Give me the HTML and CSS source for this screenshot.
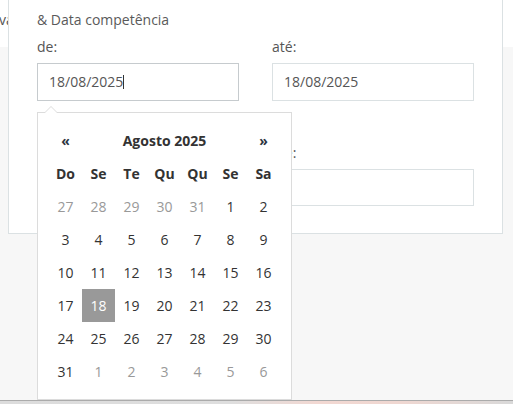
FILE: index.html
```html
<!DOCTYPE html>
<html lang="pt-BR">
<head>
    <meta charset="UTF-8">
    <meta name="viewport" content="width=device-width, initial-scale=1.0">
    <title>Filtros</title>
    <link rel="stylesheet" href="styles.css">
</head>
<body>

    <div class="page">
        <div class="side"><span>va</span></div>

        <div class="panel">
            <div class="group">
                <div class="group-title">&amp; Data competência</div>
                <div class="row">
                    <div class="field">
                        <label>de:</label>
                        <div class="input focused">18/08/2025<span class="caret"></span></div>
                    </div>
                    <div class="field">
                        <label>até:</label>
                        <div class="input">18/08/2025</div>
                    </div>
                </div>
            </div>

            <!-- second range sits under the open datepicker -->
            <div class="group second">
                <div class="group-title">&nbsp;</div>
                <div class="row">
                    <div class="field">
                        <label>&nbsp;</label>
                        <div class="input"></div>
                    </div>
                    <div class="field">
                        <label>até:</label>
                        <div class="input"></div>
                    </div>
                </div>
            </div>

            <!-- datepicker dropdown -->
            <div class="datepicker">
                <div class="dp-grid">
                    <div class="dp-nav">&laquo;</div>
                    <div class="dp-switch">Agosto 2025</div>
                    <div class="dp-nav">&raquo;</div>

                    <div class="dow">Do</div>
                    <div class="dow">Se</div>
                    <div class="dow">Te</div>
                    <div class="dow">Qu</div>
                    <div class="dow">Qu</div>
                    <div class="dow">Se</div>
                    <div class="dow">Sa</div>

                    <div class="day old">27</div>
                    <div class="day old">28</div>
                    <div class="day old">29</div>
                    <div class="day old">30</div>
                    <div class="day old">31</div>
                    <div class="day">1</div>
                    <div class="day">2</div>

                    <div class="day">3</div>
                    <div class="day">4</div>
                    <div class="day">5</div>
                    <div class="day">6</div>
                    <div class="day">7</div>
                    <div class="day">8</div>
                    <div class="day">9</div>

                    <div class="day">10</div>
                    <div class="day">11</div>
                    <div class="day">12</div>
                    <div class="day">13</div>
                    <div class="day">14</div>
                    <div class="day">15</div>
                    <div class="day">16</div>

                    <div class="day">17</div>
                    <div class="day active">18</div>
                    <div class="day">19</div>
                    <div class="day">20</div>
                    <div class="day">21</div>
                    <div class="day">22</div>
                    <div class="day">23</div>

                    <div class="day">24</div>
                    <div class="day">25</div>
                    <div class="day">26</div>
                    <div class="day">27</div>
                    <div class="day">28</div>
                    <div class="day">29</div>
                    <div class="day">30</div>

                    <div class="day">31</div>
                    <div class="day new">1</div>
                    <div class="day new">2</div>
                    <div class="day new">3</div>
                    <div class="day new">4</div>
                    <div class="day new">5</div>
                    <div class="day new">6</div>
                </div>
            </div>
        </div>

        <div class="side"></div>
    </div>

    <div class="bottom-bar"></div>

</body>
</html>
```

FILE: styles.css
```css
body {
    font-family: 'Open Sans', 'Noto Sans', sans-serif;
    font-size: 14px;
    margin: 0;
    padding: 0;
    color: #555;
    background: linear-gradient(#fff 0, #fff 47px, #f7f7f7 47px);
    height: 404px;
    overflow: hidden;
}
.page {
    display: flex;
    align-items: flex-start;
}
.side {
    width: 8px;
    height: 47px;
    overflow: hidden;
    white-space: nowrap;
    line-height: 40px;
    flex-shrink: 0;
}
.side span {
    margin-left: -1px;
}
.side:last-child {
    flex: 1;
}

.panel {
    position: relative;
    width: 495px;
    box-sizing: border-box;
    background-color: #fff;
    border: 1px solid #dbe1e3;
    border-top: none;
    padding: 10px 28px 27px;
}
.group-title {
    line-height: 20px;
    color: #5a5a5a;
}
.group.second {
    margin-top: 15px;
}
.row {
    display: grid;
    grid-template-columns: 202px 202px;
    column-gap: 33px;
}
.field label {
    display: block;
    margin-top: 7px;
    line-height: 20px;
}
.input {
    margin-top: 6px;
    height: 38px;
    box-sizing: border-box;
    border: 1px solid #dbe1e3;
    padding: 0 11px;
    line-height: 36px;
    color: #555;
}
.input.focused {
    border-color: #c6cbce;
}
.caret {
    display: inline-block;
    width: 0;
    height: 14px;
    border-left: 1px solid #333;
    vertical-align: -2px;
}
.group.second .input {
    height: 37px;
}

/* Datepicker dropdown */
.datepicker {
    position: absolute;
    top: 112px;
    left: 28px;
    width: 255px;
    box-sizing: border-box;
    padding: 11px;
    background-color: #fff;
    border: 1px solid #dcdcdc;
}
.datepicker:before {
    content: '';
    position: absolute;
    top: -7px;
    left: 6px;
    border-left: 7px solid transparent;
    border-right: 7px solid transparent;
    border-bottom: 7px solid #dcdcdc;
}
.datepicker:after {
    content: '';
    position: absolute;
    top: -6px;
    left: 7px;
    border-left: 6px solid transparent;
    border-right: 6px solid transparent;
    border-bottom: 6px solid #fff;
}
.dp-grid {
    display: grid;
    grid-template-columns: repeat(7, 33px);
    grid-auto-rows: 33px;
    color: #333;
}
.dp-grid > div {
    display: flex;
    align-items: center;
    justify-content: center;
}
.dp-nav {
    font-weight: 700;
    color: #2b3340;
}
.dp-switch {
    grid-column: span 5;
    font-weight: 700;
}
.dow {
    font-weight: 700;
}
.day.old,
.day.new {
    color: #999;
}
.day.active {
    background-color: #999;
    color: #fff;
}

.bottom-bar {
    position: fixed;
    left: 0;
    right: 0;
    bottom: 0;
    height: 3px;
    border-top: 1px solid #ababab;
    background: linear-gradient(to right, #dcdcdc 0%, #dedede 45%, #f2d8d2 62%, #efd7d1 78%, #d9d9d9 100%);
}
```
